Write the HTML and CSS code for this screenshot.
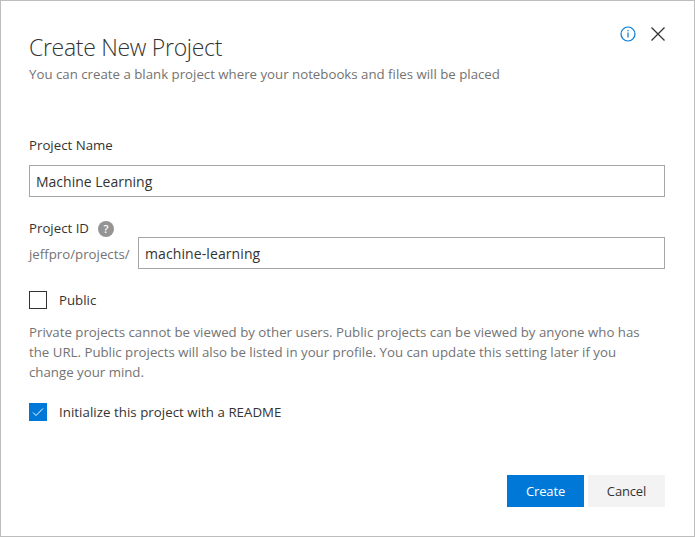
FILE: index.html
```
<!DOCTYPE html>
<html lang="en">
<head>
<meta charset="utf-8">
<title>Create New Project</title>
<link rel="stylesheet" href="styles.css">
</head>
<body>
<main class="dialog">
  <header class="header">
    <div class="heading">
      <h1>Create New Project</h1>
      <p class="subtitle">You can create a blank project where your notebooks and files will be placed</p>
    </div>
    <div class="tools">
      <svg class="info" width="16" height="16" viewBox="0 0 16 16"><circle cx="8" cy="8" r="7"/><path d="M8 6.500v5M8 4v1.200"/></svg>
      <svg class="close" width="16" height="16" viewBox="0 0 16 16"><path d="M1.500 1.500l13 13M14.500 1.500l-13 13"/></svg>
    </div>
  </header>
  <label class="label name-label" for="name">Project Name</label>
  <input class="input" id="name" value="Machine Learning">
  <div class="id-label"><label class="label" for="pid">Project ID</label><span class="help">?</span></div>
  <div class="id-row"><span class="prefix">jeffpro/projects/</span><input class="input" id="pid" value="machine-learning"></div>
  <div class="check public"><span class="box"></span><span>Public</span></div>
  <p class="description">Private projects cannot be viewed by other users. Public projects can be viewed by anyone who has<br>the URL. Public projects will also be listed in your profile. You can update this setting later if you<br>change your mind.</p>
  <div class="check readme"><span class="box checked"><svg width="18" height="18" viewBox="0 0 18 18"><path d="M4 9.500l3 3L14 5.500"/></svg></span><span>Initialize this project with a README</span></div>
  <footer class="actions"><button class="primary">Create</button><button>Cancel</button></footer>
</main>
</body>
</html>
```
FILE: styles.css
```
* { box-sizing: border-box; }
body { margin: 0; font-family: "Open Sans", "Noto Sans", sans-serif; font-size: 13.25px; color: #333; }
.dialog { height: 537px; border: 1px solid #bdbdbd; background: #fff; padding: 25px 29px 0 28px; display: flex; flex-direction: column; }
.header { display: flex; justify-content: space-between; height: 109px; }
h1 { margin: 5px 0 0; font-size: 23px; line-height: 32px; font-weight: 300; letter-spacing: -0.3px; }
.subtitle { margin: 1px 0 0; line-height: 20px; color: #737373; white-space: nowrap; }
.tools { display: flex; gap: 14px; margin-right: -1px; }
svg { fill: none; }
.info { stroke: #0078d7; stroke-width: 1.2; }
.close { stroke: #333; stroke-width: 1.3; }
.label { line-height: 20px; }
.input { width: 100%; height: 32px; border: 1px solid #a6a6a6; padding: 0 6px; font: 14px "Open Sans", sans-serif; color: #333; }
#pid { letter-spacing: 0.1px; }
.name-label { margin-bottom: 10px; }
.id-label { display: flex; align-items: center; gap: 9px; margin-top: 21px; height: 19px; }
.help { width: 16px; height: 16px; margin-top: 2px; border-radius: 50%; background: #949494; color: #fff; font-size: 11px; font-weight: 600; line-height: 16px; text-align: center; }
.id-row { display: flex; }
.prefix { flex: 0 0 109px; line-height: 34px; color: #737373; }
.check { display: flex; align-items: center; gap: 12px; height: 20px; }
.public { margin-top: 21px; }
.id-row { height: 32px; }
.box { width: 18px; height: 18px; border: 1px solid #333; }
.checked { border: 0; background: #0078d7; }
.checked svg { display: block; stroke: #fff; }
.description { margin: 12px 0 0; line-height: 20px; color: #737373; white-space: nowrap; }
.readme { margin-top: 20px; letter-spacing: 0.05px; }
.actions { display: flex; justify-content: flex-end; gap: 4px; margin-top: 53px; }
button { width: 77px; height: 32px; padding: 0; border: 0; background: #f3f3f3; font: 13px "Open Sans", sans-serif; letter-spacing: -0.15px; color: #333; }
.primary { background: #0078d7; color: #fff; }
```
